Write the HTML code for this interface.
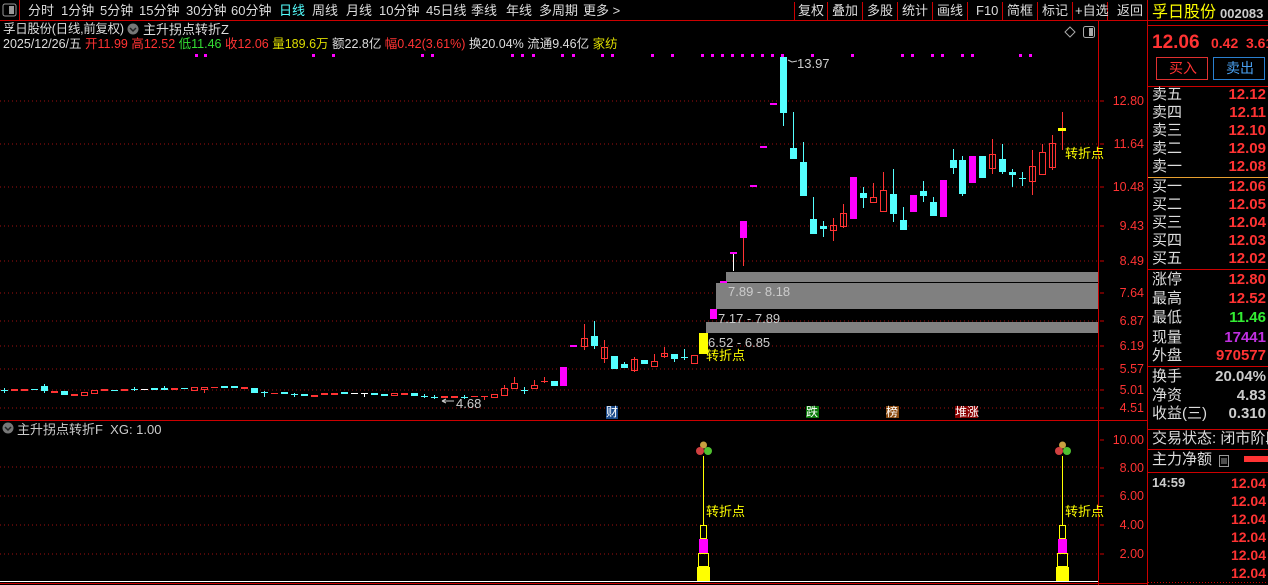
<!DOCTYPE html>
<html><head><meta charset="utf-8"><style>
*{margin:0;padding:0;box-sizing:border-box}
body{width:1268px;height:585px;background:#000;overflow:hidden;position:relative;font-family:"Liberation Sans","WenQuanYi Zen Hei","Noto Sans CJK SC",sans-serif;font-size:13px;color:#ddd}
.a{position:absolute;white-space:nowrap;line-height:1}
.rp{position:absolute;left:1152px;width:114px;font-size:15px;line-height:18px;color:#ddd;white-space:nowrap}
.rp span{float:right;font-weight:bold;color:#ff3333}
</style></head><body>
<svg class="a" style="left:0;top:0" width="1268" height="585" xmlns="http://www.w3.org/2000/svg">
<g fill="none" stroke="#c00" stroke-width="1">
<line x1="0" y1="20.5" x2="1268" y2="20.5"/>
<line x1="19.5" y1="0" x2="19.5" y2="20"/>
<line x1="1098.5" y1="21" x2="1098.5" y2="585"/>
<line x1="1147.5" y1="0" x2="1147.5" y2="585"/>
<line x1="0" y1="420.5" x2="1147" y2="420.5"/>
<line x1="0" y1="583.5" x2="1147" y2="583.5"/>
<line x1="1148" y1="25.5" x2="1268" y2="25.5"/>
<line x1="1148" y1="86.5" x2="1268" y2="86.5"/>
<line x1="1148" y1="269.5" x2="1268" y2="269.5"/>
<line x1="1148" y1="366.5" x2="1268" y2="366.5"/>
<line x1="1148" y1="429.5" x2="1268" y2="429.5"/>
<line x1="1148" y1="449.5" x2="1268" y2="449.5"/>
<line x1="1148" y1="472.5" x2="1268" y2="472.5"/>
<line x1="794.5" y1="2" x2="794.5" y2="20"/><line x1="827.5" y1="2" x2="827.5" y2="20"/><line x1="862.5" y1="2" x2="862.5" y2="20"/><line x1="897.5" y1="2" x2="897.5" y2="20"/><line x1="932.5" y1="2" x2="932.5" y2="20"/><line x1="967.5" y1="2" x2="967.5" y2="20"/><line x1="1002.5" y1="2" x2="1002.5" y2="20"/><line x1="1037.5" y1="2" x2="1037.5" y2="20"/><line x1="1072.5" y1="2" x2="1072.5" y2="20"/><line x1="1107.5" y1="2" x2="1107.5" y2="20"/>
</g>
<line x1="1148" y1="177.5" x2="1268" y2="177.5" stroke="#e8a030"/>
<line x1="1148" y1="582.5" x2="1268" y2="582.5" stroke="#c00" stroke-dasharray="1 2"/>
<rect x="3" y="4" width="13" height="12" rx="2" fill="none" stroke="#999"/><rect x="9" y="6" width="5" height="8" fill="#999"/>
<g stroke="#a01010" stroke-dasharray="1 3">
<line x1="0" y1="101" x2="1098" y2="101"/><line x1="0" y1="144" x2="1098" y2="144"/><line x1="0" y1="187" x2="1098" y2="187"/><line x1="0" y1="226" x2="1098" y2="226"/><line x1="0" y1="261" x2="1098" y2="261"/><line x1="0" y1="293" x2="1098" y2="293"/><line x1="0" y1="321" x2="1098" y2="321"/><line x1="0" y1="346" x2="1098" y2="346"/><line x1="0" y1="369" x2="1098" y2="369"/><line x1="0" y1="390" x2="1098" y2="390"/><line x1="0" y1="408" x2="1098" y2="408"/>
<line x1="0" y1="467" x2="1098" y2="467"/><line x1="0" y1="496" x2="1098" y2="496"/><line x1="0" y1="525" x2="1098" y2="525"/><line x1="0" y1="554" x2="1098" y2="554"/>
</g>
<g stroke="#c00"><line x1="1100" y1="101" x2="1104" y2="101"/><line x1="1100" y1="144" x2="1104" y2="144"/><line x1="1100" y1="187" x2="1104" y2="187"/><line x1="1100" y1="226" x2="1104" y2="226"/><line x1="1100" y1="261" x2="1104" y2="261"/><line x1="1100" y1="293" x2="1104" y2="293"/><line x1="1100" y1="321" x2="1104" y2="321"/><line x1="1100" y1="346" x2="1104" y2="346"/><line x1="1100" y1="369" x2="1104" y2="369"/><line x1="1100" y1="390" x2="1104" y2="390"/><line x1="1100" y1="408" x2="1104" y2="408"/><line x1="1100" y1="440" x2="1104" y2="440"/><line x1="1100" y1="468" x2="1104" y2="468"/><line x1="1100" y1="496" x2="1104" y2="496"/><line x1="1100" y1="525" x2="1104" y2="525"/><line x1="1100" y1="554" x2="1104" y2="554"/></g>
<g fill="#f0f">
<rect x="195" y="54" width="3" height="3"/><rect x="204" y="54" width="3" height="3"/><rect x="312" y="54" width="3" height="3"/><rect x="332" y="54" width="3" height="3"/><rect x="421" y="54" width="3" height="3"/><rect x="431" y="54" width="3" height="3"/><rect x="511" y="54" width="3" height="3"/><rect x="521" y="54" width="3" height="3"/><rect x="532" y="54" width="3" height="3"/><rect x="561" y="54" width="3" height="3"/><rect x="572" y="54" width="3" height="3"/><rect x="601" y="54" width="3" height="3"/><rect x="611" y="54" width="3" height="3"/>
<rect x="651" y="54" width="3" height="3"/><rect x="671" y="54" width="3" height="3"/><rect x="701" y="54" width="3" height="3"/><rect x="711" y="54" width="3" height="3"/><rect x="721" y="54" width="3" height="3"/><rect x="731" y="54" width="3" height="3"/><rect x="741" y="54" width="3" height="3"/><rect x="751" y="54" width="3" height="3"/><rect x="761" y="54" width="3" height="3"/><rect x="771" y="54" width="3" height="3"/><rect x="781" y="54" width="3" height="3"/><rect x="811" y="54" width="3" height="3"/><rect x="851" y="54" width="3" height="3"/><rect x="901" y="54" width="3" height="3"/><rect x="911" y="54" width="3" height="3"/><rect x="931" y="54" width="3" height="3"/><rect x="941" y="54" width="3" height="3"/><rect x="961" y="54" width="3" height="3"/><rect x="971" y="54" width="3" height="3"/><rect x="1019" y="54" width="3" height="3"/><rect x="1029" y="54" width="3" height="3"/>
</g>
<g fill="#808080"><rect x="726" y="272" width="372" height="10"/><rect x="716" y="283" width="382" height="26"/><rect x="706" y="322" width="392" height="11"/></g>
<g stroke-width="1">
<g stroke="#54ffff">
<line x1="44.5" y1="384" x2="44.5" y2="393"/><line x1="164.5" y1="386" x2="164.5" y2="389"/><line x1="264.5" y1="391" x2="264.5" y2="397"/><line x1="294.5" y1="393" x2="294.5" y2="397"/><line x1="524.5" y1="387" x2="524.5" y2="394"/>
<line x1="594.5" y1="321" x2="594.5" y2="349"/><line x1="624.5" y1="362" x2="624.5" y2="368"/><line x1="674.5" y1="354" x2="674.5" y2="362"/><line x1="684.5" y1="349" x2="684.5" y2="360"/>
<line x1="783.5" y1="113" x2="783.5" y2="126"/><line x1="793.5" y1="112" x2="793.5" y2="148"/><line x1="803.5" y1="142" x2="803.5" y2="162"/><line x1="813.5" y1="197" x2="813.5" y2="219"/><line x1="823.5" y1="221" x2="823.5" y2="237"/><line x1="863.5" y1="187" x2="863.5" y2="208"/><line x1="893.5" y1="169" x2="893.5" y2="222"/><line x1="903.5" y1="207" x2="903.5" y2="220"/><line x1="923.5" y1="181" x2="923.5" y2="202"/><line x1="933.5" y1="197" x2="933.5" y2="202"/><line x1="953.5" y1="149" x2="953.5" y2="174"/><line x1="962.5" y1="156" x2="962.5" y2="196"/><line x1="1002.5" y1="144" x2="1002.5" y2="174"/><line x1="1012.5" y1="169" x2="1012.5" y2="187"/><line x1="1022.5" y1="172" x2="1022.5" y2="186"/>
</g>
<g stroke="#ff3333">
<line x1="204.5" y1="390" x2="204.5" y2="393"/><line x1="504.5" y1="385" x2="504.5" y2="388"/><line x1="514.5" y1="377" x2="514.5" y2="383"/><line x1="534.5" y1="380" x2="534.5" y2="385"/><line x1="544.5" y1="377" x2="544.5" y2="383"/>
<line x1="584.5" y1="324" x2="584.5" y2="350"/><line x1="604.5" y1="340" x2="604.5" y2="363"/><line x1="634.5" y1="357" x2="634.5" y2="372"/><line x1="654.5" y1="354" x2="654.5" y2="361"/><line x1="664.5" y1="347" x2="664.5" y2="358"/>
<line x1="743.5" y1="238" x2="743.5" y2="266"/><line x1="833.5" y1="218" x2="833.5" y2="241"/><line x1="843.5" y1="204" x2="843.5" y2="228"/><line x1="873.5" y1="183" x2="873.5" y2="197"/><line x1="883.5" y1="172" x2="883.5" y2="190"/><line x1="992.5" y1="139" x2="992.5" y2="174"/><line x1="1032.5" y1="150" x2="1032.5" y2="195"/><line x1="1042.5" y1="144" x2="1042.5" y2="152"/><line x1="1052.5" y1="135" x2="1052.5" y2="170"/><line x1="1062.5" y1="112" x2="1062.5" y2="150"/>
</g>
<line x1="733.5" y1="253" x2="733.5" y2="271" stroke="#fff"/>
</g>
<g stroke-width="1">
<g stroke="#54ffff"><line x1="1" y1="390.5" x2="8" y2="390.5"/><line x1="31" y1="389.5" x2="38" y2="389.5"/><line x1="111" y1="390.5" x2="118" y2="390.5"/><line x1="131" y1="389.5" x2="138" y2="389.5"/><line x1="181" y1="388.5" x2="188" y2="388.5"/><line x1="261" y1="392.5" x2="268" y2="392.5"/><line x1="291" y1="394.5" x2="298" y2="394.5"/><line x1="421" y1="396.5" x2="428" y2="396.5"/><line x1="431" y1="397.5" x2="438" y2="397.5"/><line x1="461" y1="397.5" x2="468" y2="397.5"/><line x1="521" y1="390.5" x2="528" y2="390.5"/><line x1="681" y1="357.5" x2="688" y2="357.5"/><line x1="1019" y1="178.5" x2="1026" y2="178.5"/><line x1="4.5" y1="388" x2="4.5" y2="393"/><line x1="134.5" y1="387" x2="134.5" y2="391"/><line x1="434.5" y1="395" x2="434.5" y2="399"/><line x1="424.5" y1="394" x2="424.5" y2="398"/><line x1="464.5" y1="395" x2="464.5" y2="399"/></g>
<g stroke="#fff"><line x1="141" y1="389.5" x2="148" y2="389.5"/><line x1="351" y1="393.5" x2="358" y2="393.5"/><line x1="361" y1="393.5" x2="368" y2="393.5"/><line x1="364.5" y1="393" x2="364.5" y2="397"/></g>
<g stroke="#ff3333"><line x1="211" y1="387.5" x2="218" y2="387.5"/><line x1="541" y1="381.5" x2="548" y2="381.5"/><line x1="481" y1="396.5" x2="488" y2="396.5"/><line x1="484.5" y1="396" x2="484.5" y2="400"/></g>
</g>
<g fill="#54ffff">
<rect x="41" y="386" width="7" height="5"/><rect x="61" y="391" width="7" height="4"/><rect x="151" y="388" width="7" height="2"/><rect x="161" y="388" width="7" height="2"/><rect x="221" y="386" width="7" height="2"/><rect x="231" y="386" width="7" height="2"/><rect x="251" y="388" width="7" height="5"/><rect x="281" y="392" width="7" height="2"/><rect x="301" y="394" width="7" height="2"/><rect x="341" y="392" width="7" height="2"/><rect x="371" y="393" width="7" height="2"/><rect x="381" y="394" width="7" height="2"/><rect x="411" y="393" width="7" height="3"/>
<rect x="551" y="381" width="7" height="5"/><rect x="591" y="336" width="7" height="10"/><rect x="611" y="356" width="7" height="13"/><rect x="621" y="364" width="7" height="4"/><rect x="641" y="360" width="7" height="4"/><rect x="671" y="354" width="7" height="5"/>
<rect x="780" y="57" width="7" height="56"/><rect x="790" y="148" width="7" height="11"/><rect x="800" y="162" width="7" height="34"/><rect x="810" y="219" width="7" height="15"/><rect x="820" y="226" width="7" height="3"/><rect x="860" y="193" width="7" height="5"/><rect x="890" y="194" width="7" height="20"/><rect x="900" y="220" width="7" height="10"/><rect x="920" y="191" width="7" height="5"/><rect x="930" y="202" width="7" height="14"/><rect x="950" y="160" width="7" height="8"/><rect x="959" y="160" width="7" height="34"/><rect x="979" y="156" width="7" height="22"/><rect x="999" y="159" width="7" height="13"/><rect x="1009" y="172" width="7" height="3"/>
</g>
<g fill="#ff3333">
<rect x="11" y="389" width="7" height="2"/><rect x="21" y="389" width="7" height="2"/><rect x="51" y="391" width="7" height="2"/><rect x="71" y="394" width="7" height="2"/><rect x="101" y="389" width="7" height="2"/><rect x="121" y="389" width="7" height="2"/><rect x="171" y="388" width="7" height="2"/><rect x="241" y="387" width="7" height="2"/><rect x="271" y="393" width="7" height="1"/><rect x="311" y="395" width="7" height="2"/><rect x="321" y="393" width="7" height="2"/><rect x="331" y="393" width="7" height="2"/><rect x="401" y="393" width="7" height="2"/><rect x="441" y="396" width="7" height="2"/><rect x="451" y="396" width="7" height="2"/><rect x="471" y="396" width="7" height="1"/>
</g>
<g fill="none" stroke="#ff3333">
<rect x="81.5" y="392.5" width="6" height="3"/><rect x="91.5" y="390.5" width="6" height="3"/><rect x="191.5" y="387.5" width="6" height="3"/><rect x="201.5" y="387.5" width="6" height="2"/><rect x="391.5" y="393.5" width="6" height="2"/><rect x="491.5" y="394.5" width="6" height="3"/><rect x="501.5" y="388.5" width="6" height="7"/><rect x="511.5" y="383.5" width="6" height="5"/><rect x="531.5" y="385.5" width="6" height="3"/>
<rect x="581.5" y="338.5" width="6" height="8"/><rect x="601.5" y="347.5" width="6" height="11"/><rect x="631.5" y="359.5" width="6" height="11"/><rect x="651.5" y="361.5" width="6" height="5"/><rect x="661.5" y="353.5" width="6" height="3"/><rect x="691.5" y="355.5" width="6" height="8"/>
<rect x="830.5" y="225.5" width="6" height="5"/><rect x="840.5" y="213.5" width="6" height="13"/><rect x="870.5" y="197.5" width="6" height="5"/><rect x="880.5" y="190.5" width="6" height="21"/><rect x="989.5" y="154.5" width="6" height="14"/><rect x="1029.5" y="166.5" width="6" height="15"/><rect x="1039.5" y="152.5" width="6" height="22"/><rect x="1049.5" y="143.5" width="6" height="24"/>
</g>
<g fill="#f0f">
<rect x="560" y="367" width="7" height="19"/><rect x="570" y="345" width="7" height="2"/><rect x="710" y="309" width="7" height="10"/><rect x="720" y="281" width="7" height="2"/><rect x="730" y="252" width="7" height="2"/><rect x="740" y="221" width="7" height="17"/><rect x="750" y="185" width="7" height="2"/><rect x="760" y="146" width="7" height="2"/><rect x="770" y="103" width="7" height="2"/>
<rect x="850" y="177" width="7" height="42"/><rect x="910" y="195" width="7" height="17"/><rect x="940" y="180" width="7" height="37"/><rect x="969" y="156" width="7" height="27"/>
</g>
<rect x="699" y="333" width="9" height="21" fill="#ff0"/>
<rect x="1058" y="128" width="8" height="3" fill="#ff0"/>
<path d="M788 60 l4 2 l5 -1" stroke="#ccc" fill="none"/>
<path d="M442 401 l4 -2 M442 401 l4 2 M442 401 h12" stroke="#ccc" fill="none"/>
<rect x="606" y="406" width="12" height="13" fill="#1a4a8a"/><rect x="806" y="406" width="13" height="12" fill="#0a7a0a"/><rect x="886" y="406" width="13" height="12" fill="#8a4a10"/><rect x="955" y="406" width="23" height="12" fill="#800"/>
<g id="tw">
<line x1="703.5" y1="456" x2="703.5" y2="525" stroke="#ff0"/>
<rect x="700.5" y="525.5" width="6" height="13" fill="none" stroke="#ff0"/>
<rect x="699" y="539" width="9" height="15" fill="#f0f"/>
<rect x="698.5" y="553.5" width="10" height="13" fill="none" stroke="#ff0"/>
<rect x="697" y="567" width="13" height="15" fill="#ff0"/>
<circle cx="703.5" cy="445" r="3.5" fill="#c9a040"/><circle cx="700" cy="451" r="4" fill="#d04040"/><circle cx="708" cy="451" r="4" fill="#50c030"/>
</g>
<use href="#tw" x="359"/>
<line x1="0" y1="581.5" x2="1098" y2="581.5" stroke="#fff"/>
<path d="M1070 27 l5 5 l-5 5 l-5 -5z" fill="none" stroke="#aaa"/>
<rect x="1083.5" y="26.5" width="11" height="11" rx="2" fill="none" stroke="#aaa"/><rect x="1089" y="28" width="4" height="8" fill="#aaa"/>
<circle cx="133" cy="29" r="5.5" fill="#777"/><path d="M130 28 l3 3 l3 -3" stroke="#222" fill="none" stroke-width="1.5"/>
<circle cx="8" cy="428" r="5.5" fill="#777"/><path d="M5 427 l3 3 l3 -3" stroke="#222" fill="none" stroke-width="1.5"/>
<rect x="1156.5" y="57.5" width="51" height="22" fill="none" stroke="#e03030"/>
<rect x="1213.5" y="57.5" width="51" height="22" fill="none" stroke="#2a80d0"/>
<rect x="1244" y="456" width="24" height="6" fill="#ff3333"/>
<rect x="1219.5" y="455.5" width="9" height="11" fill="none" stroke="#999"/><path d="M1221 459h6M1221 461h6M1221 463h6" stroke="#999"/>
</svg>

<div class="a" style="top:4px;left:28px;color:#ddd">分时</div>
<div class="a" style="top:4px;left:61px">1分钟</div>
<div class="a" style="top:4px;left:100px">5分钟</div>
<div class="a" style="top:4px;left:139px">15分钟</div>
<div class="a" style="top:4px;left:186px">30分钟</div>
<div class="a" style="top:4px;left:231px">60分钟</div>
<div class="a" style="top:4px;left:279px;color:#54ffff">日线</div>
<div class="a" style="top:4px;left:312px">周线</div>
<div class="a" style="top:4px;left:346px">月线</div>
<div class="a" style="top:4px;left:379px">10分钟</div>
<div class="a" style="top:4px;left:426px">45日线</div>
<div class="a" style="top:4px;left:471px">季线</div>
<div class="a" style="top:4px;left:506px">年线</div>
<div class="a" style="top:4px;left:539px">多周期</div>
<div class="a" style="top:4px;left:583px">更多 &gt;</div>
<div class="a" style="top:4px;left:798px">复权</div>
<div class="a" style="top:4px;left:832px">叠加</div>
<div class="a" style="top:4px;left:867px">多股</div>
<div class="a" style="top:4px;left:902px">统计</div>
<div class="a" style="top:4px;left:937px">画线</div>
<div class="a" style="top:4px;left:976px">F10</div>
<div class="a" style="top:4px;left:1007px">简框</div>
<div class="a" style="top:4px;left:1042px">标记</div>
<div class="a" style="top:4px;left:1075px">+自选</div>
<div class="a" style="top:4px;left:1117px">返回</div>

<div class="a" style="top:5px;left:1152px;font-size:16px;color:#ff0">孚日股份</div>
<div class="a" style="top:7px;left:1220px;font-size:13px;font-weight:bold;color:#ccc">002083</div>
<div class="a" style="top:33px;left:1152px;font-size:19px;font-weight:bold;color:#ff3333">12.06</div>
<div class="a" style="top:36px;left:1211px;font-size:14px;font-weight:bold;color:#ff3333">0.42</div>
<div class="a" style="top:36px;left:1246px;font-size:14px;font-weight:bold;color:#ff3333">3.61</div>
<div class="a" style="top:61px;left:1169px;font-size:14px;color:#ff3333">买入</div>
<div class="a" style="top:61px;left:1226px;font-size:14px;color:#4aa0f0">卖出</div>

<div class="a" style="top:23px;left:3px;font-size:12.5px;letter-spacing:-0.3px">孚日股份(日线,前复权)</div>
<div class="a" style="top:23px;left:143px">主升拐点转折Z</div>
<div class="a" style="top:38px;left:3px;font-size:12.5px">2025/12/26/五 <span style="color:#ff3333">开11.99</span> <span style="color:#ff3333">高12.52</span> <span style="color:#33dd33">低11.46</span> <span style="color:#ff3333">收12.06</span> <span style="color:#dddd00">量189.6万</span> 额22.8亿 <span style="color:#ff3333">幅0.42(3.61%)</span> 换20.04% 流通9.46亿 <span style="color:#dddd00">家纺</span></div>

<div class="a" style="top:57px;left:797px;color:#ccc">13.97</div>
<div class="a" style="top:397px;left:456px;color:#ccc">4.68</div>
<div class="a" style="top:285px;left:728px;color:#ccc">7.89 - 8.18</div>
<div class="a" style="top:312px;left:718px;color:#ccc">7.17 - 7.89</div>
<div class="a" style="top:336px;left:708px;color:#ccc">6.52 - 6.85</div>
<div class="a" style="top:349px;left:706px;color:#ff0">转折点</div>
<div class="a" style="top:147px;left:1065px;color:#ff0">转折点</div>
<div class="a" style="top:505px;left:706px;color:#ff0">转折点</div>
<div class="a" style="top:505px;left:1065px;color:#ff0">转折点</div>
<div class="a" style="top:406px;left:606px;color:#fff;font-size:12px">财</div>
<div class="a" style="top:406px;left:806px;color:#fff;font-size:12px">跌</div>
<div class="a" style="top:406px;left:886px;color:#fff;font-size:12px">榜</div>
<div class="a" style="top:406px;left:955px;color:#fff;font-size:12px">堆涨</div>
<div class="a" style="top:423px;left:17px;color:#ccc">主升拐点转折F&nbsp; XG: 1.00</div>

<div class="a" style="left:1100px;width:44px;text-align:right;color:#ff3333;font-size:12.5px;top:95px">12.80</div>
<div class="a" style="left:1100px;width:44px;text-align:right;color:#ff3333;font-size:12.5px;top:138px">11.64</div>
<div class="a" style="left:1100px;width:44px;text-align:right;color:#ff3333;font-size:12.5px;top:181px">10.48</div>
<div class="a" style="left:1100px;width:44px;text-align:right;color:#ff3333;font-size:12.5px;top:220px">9.43</div>
<div class="a" style="left:1100px;width:44px;text-align:right;color:#ff3333;font-size:12.5px;top:255px">8.49</div>
<div class="a" style="left:1100px;width:44px;text-align:right;color:#ff3333;font-size:12.5px;top:287px">7.64</div>
<div class="a" style="left:1100px;width:44px;text-align:right;color:#ff3333;font-size:12.5px;top:315px">6.87</div>
<div class="a" style="left:1100px;width:44px;text-align:right;color:#ff3333;font-size:12.5px;top:340px">6.19</div>
<div class="a" style="left:1100px;width:44px;text-align:right;color:#ff3333;font-size:12.5px;top:363px">5.57</div>
<div class="a" style="left:1100px;width:44px;text-align:right;color:#ff3333;font-size:12.5px;top:384px">5.01</div>
<div class="a" style="left:1100px;width:44px;text-align:right;color:#ff3333;font-size:12.5px;top:402px">4.51</div>
<div class="a" style="left:1100px;width:44px;text-align:right;color:#ff3333;font-size:12.5px;top:434px">10.00</div>
<div class="a" style="left:1100px;width:44px;text-align:right;color:#ff3333;font-size:12.5px;top:462px">8.00</div>
<div class="a" style="left:1100px;width:44px;text-align:right;color:#ff3333;font-size:12.5px;top:490px">6.00</div>
<div class="a" style="left:1100px;width:44px;text-align:right;color:#ff3333;font-size:12.5px;top:519px">4.00</div>
<div class="a" style="left:1100px;width:44px;text-align:right;color:#ff3333;font-size:12.5px;top:548px">2.00</div>

<div class="rp" style="top:86px">卖五<span>12.12</span></div>
<div class="rp" style="top:104px">卖四<span>12.11</span></div>
<div class="rp" style="top:122px">卖三<span>12.10</span></div>
<div class="rp" style="top:140px">卖二<span>12.09</span></div>
<div class="rp" style="top:158px">卖一<span>12.08</span></div>
<div class="rp" style="top:178px">买一<span>12.06</span></div>
<div class="rp" style="top:196px">买二<span>12.05</span></div>
<div class="rp" style="top:214px">买三<span>12.04</span></div>
<div class="rp" style="top:232px">买四<span>12.03</span></div>
<div class="rp" style="top:250px">买五<span>12.02</span></div>
<div class="rp" style="top:271px">涨停<span>12.80</span></div>
<div class="rp" style="top:290px">最高<span>12.52</span></div>
<div class="rp" style="top:309px">最低<span style="color:#33ee33">11.46</span></div>
<div class="rp" style="top:329px">现量<span style="color:#c030e0">17441</span></div>
<div class="rp" style="top:347px">外盘<span>970577</span></div>
<div class="rp" style="top:368px">换手<span style="color:#ccc">20.04%</span></div>
<div class="rp" style="top:387px">净资<span style="color:#ccc">4.83</span></div>
<div class="rp" style="top:405px">收益(三)<span style="color:#ccc">0.310</span></div>
<div class="rp" style="top:430px;width:116px;height:18px;overflow:hidden">交易状态: 闭市阶段</div>
<div class="rp" style="top:451px">主力净额</div>
<div class="rp" style="top:474px;font-size:13px"><b style="color:#ccc">14:59</b><span style="font-size:14px">12.04</span></div>
<div class="rp" style="top:492px"><span style="font-size:14px">12.04</span></div>
<div class="rp" style="top:510px"><span style="font-size:14px">12.04</span></div>
<div class="rp" style="top:528px"><span style="font-size:14px">12.04</span></div>
<div class="rp" style="top:546px"><span style="font-size:14px">12.04</span></div>
<div class="rp" style="top:564px"><span style="font-size:14px">12.04</span></div>
</body></html>
